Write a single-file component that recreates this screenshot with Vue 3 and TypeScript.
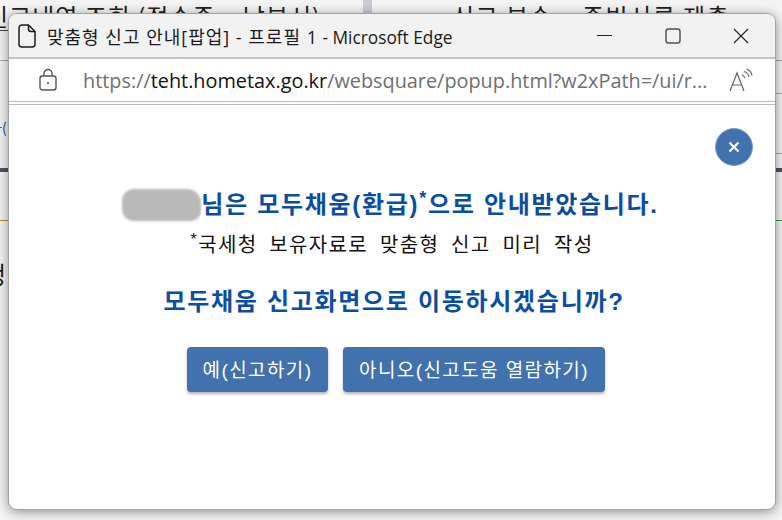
<script setup lang="ts">
const url = 'https://'
</script>

<template>
  <div class="desktop">
    <div class="behind">
      <div class="behind-title left">신고내역 조회 (접수증 · 납부서)</div>
      <div class="behind-title right">신고 부속 · 증빙서류 제출</div>
      <div class="rule dark"></div>
      <div class="rule orange"></div>
      <div class="rule-right green"></div>
      <div class="rule-right r1"></div>
      <div class="rule-right r2"></div>
      <div class="rule-right r3"></div>
      <div class="rule under"></div>
      <div class="rule gray-left"></div>
      <div class="glyph">정</div>
      <div class="glyph-blue">파(</div>
      <div class="divider"></div>
    </div>

    <section class="window">
      <header class="titlebar">
        <svg class="doc" width="18" height="24" viewBox="0 0 18 24" fill="none" stroke="#1c1c1c" stroke-width="1.5">
          <path d="M4 1h6.5L17 7.5V20a3 3 0 0 1-3 3H4a3 3 0 0 1-3-3V4a3 3 0 0 1 3-3z" />
          <path d="M10.500 1v4a2.500 2.500 0 0 0 2.500 2.500h4" />
        </svg>
        <span class="title"><span class="title-ko">맞춤형 신고 안내[팝업] - 프로필 1</span> - Microsoft Edge</span>
        <div class="controls">
          <svg width="16" height="16" viewBox="0 0 16 16"><path d="M0 7.500h15" stroke="#222" stroke-width="1" /></svg>
          <svg width="16" height="16" viewBox="0 0 16 16" fill="none"><rect x="1" y="1" width="14" height="14" rx="2.500" stroke="#555" stroke-width="1.500" /></svg>
          <svg width="16" height="16" viewBox="0 0 16 16"><path d="M1 1l14 14M15 1L1 15" stroke="#222" stroke-width="1.100" /></svg>
        </div>
      </header>
      <div class="addressbar">
        <svg class="lock" width="18" height="24" viewBox="0 0 18 24" fill="none" stroke="#555" stroke-width="1.400">
          <rect x="1" y="8" width="16" height="14" rx="2.500" />
          <path d="M5 8V5.500a4 4 0 0 1 8 0V8" />
          <circle cx="9" cy="15" r="1" fill="#555" stroke="none" />
        </svg>
        <div class="url"><span class="dim">{{ url }}</span><span class="host">teht.hometax.go.kr</span><span class="dim">/websquare/popup.html?w2xPath=/ui/r...</span></div>
        <svg class="read" width="24" height="24" viewBox="0 0 24 24" fill="none" stroke="#666" stroke-width="1.200">
          <path d="M1 23L8 5l7 18M3.500 17h9.500" />
          <path d="M13 7c1.500.5 2.500 1.700 2.800 3.200M15 3.500c2.800.8 4.500 3 5 5.500M17.500 1c3 1 5 3.500 5.500 6.500" />
        </svg>
      </div>
      <main class="content">
        <button class="close" type="button" aria-label="닫기">
          <svg width="12" height="12" viewBox="0 0 12 12"><path d="M1.500 1.500l9 9M10.500 1.500l-9 9" stroke="#fff" stroke-width="2.200" /></svg>
        </button>
        <div class="headline"><span class="blur"></span><span>님은 모두채움(환급)<sup>*</sup>으로 안내받았습니다.</span></div>
        <p class="note"><sup>*</sup>국세청 보유자료로 맞춤형 신고 미리 작성</p>
        <p class="question">모두채움 신고화면으로 이동하시겠습니까?</p>
        <div class="actions">
          <button class="btn yes" type="button">예(신고하기)</button>
          <button class="btn no" type="button">아니오(신고도움 열람하기)</button>
        </div>
      </main>
    </section>
  </div>
</template>

<style>
html, body { margin: 0; padding: 0; }
</style>

<style scoped>
.desktop {
  position: relative;
  width: 782px;
  height: 520px;
  overflow: hidden;
  background: #f4f4f4;
  font-family: "Noto Sans CJK KR", "Open Sans", sans-serif;
}
.behind { position: absolute; inset: 0; }
.behind-title {
  position: absolute;
  top: 0;
  font-size: 24px;
  line-height: 32px;
  letter-spacing: 1.500px;
  color: #222;
  white-space: nowrap;
}
.behind-title.left { left: -14px; letter-spacing: 1px; }
.behind-title.right { left: 452px; }
.rule { position: absolute; left: 0; right: 0; }
.rule.dark { top: 168px; height: 4px; background: #4d5468; }
.rule.orange { top: 220px; height: 1px; background: #c8891f; right: 400px; }
.rule.under { top: 30px; height: 1px; right: 700px; background: #444; }
.rule.gray-left { top: 60px; height: 1px; right: 700px; background: #aaa; }
.rule-right { position: absolute; left: 700px; right: 0; height: 1px; background: #aaa; }
.rule-right.green { top: 220px; background: #2f9e4f; }
.rule-right.r1 { top: 60px; }
.rule-right.r2 { top: 93px; }
.rule-right.r3 { top: 153px; }
.glyph { position: absolute; left: -16px; top: 258px; font-size: 24px; line-height: 32px; color: #222; }
.glyph-blue { position: absolute; left: -11px; top: 116px; font-size: 14px; line-height: 22px; color: #2a4f9a; white-space: nowrap; }
.divider { position: absolute; left: 363px; top: 0; width: 9px; height: 14px; background: #c8cdd6; }

.window {
  position: absolute;
  left: 8px;
  top: 13px;
  width: 768px;
  height: 497px;
  box-sizing: border-box;
  border-radius: 9px;
  overflow: hidden;
  background: #fff;
  border: 1px solid #a3a3a3;
  box-shadow: 0 2px 12px rgba(0, 0, 0, 0.42);
  display: flex;
  flex-direction: column;
}
.titlebar {
  height: 45px;
  flex: none;
  box-sizing: border-box;
  display: flex;
  align-items: center;
  padding: 0 0 0 9px;
  background: #f2f2f2;
  border-bottom: 2px solid #c4c4c4;
}
.doc { flex: none; margin-right: 11px; }
.title { font-size: 17.300px; color: #1b1b1b; white-space: nowrap; font-family: "Open Sans", "Noto Sans CJK KR", sans-serif; }
.title-ko { font-size: 18px; letter-spacing: 1px; }
.controls {
  margin-left: auto;
  display: flex;
  align-items: center;
  gap: 52px;
  padding-right: 26px;
}
.addressbar {
  height: 46px;
  flex: none;
  box-sizing: border-box;
  display: flex;
  align-items: center;
  padding: 0 14px 0 30px;
  background: #fff;
  border-bottom: 4px double #bbb;
}
.lock { flex: none; margin-right: 26px; }
.url { flex: 1; font-size: 19.850px; white-space: nowrap; overflow: hidden; font-family: "Open Sans", sans-serif; }
.dim { color: #6f6f6f; }
.host { color: #111; }
.read { flex: none; margin-right: 8px; }

.content {
  flex: 1;
  position: relative;
  display: flex;
  flex-direction: column;
  align-items: center;
  padding-top: 82px;
  font-family: "Liberation Sans", "Noto Sans CJK KR", sans-serif;
}
.close {
  position: absolute;
  top: 23px;
  right: 22px;
  width: 38px;
  height: 38px;
  padding: 0;
  border-radius: 50%;
  border: 1px solid #7f9fc6;
  background: #4272ae;
  display: flex;
  align-items: center;
  justify-content: center;
}
.headline {
  display: flex;
  align-items: center;
  font-size: 24px;
  font-weight: 700;
  line-height: 36px;
  letter-spacing: 1.700px;
  color: #0a4ea2;
  white-space: nowrap;
}
.headline sup { font-size: 18px; line-height: 0; vertical-align: 9px; }
.blur {
  width: 79px;
  height: 32px;
  margin-left: -3px;
  border-radius: 12px 14px 10px 12px;
  background: #b9b9b9;
  filter: blur(1px);
}
.note {
  margin: 9px 0 0;
  font-size: 20px;
  line-height: 26px;
  letter-spacing: 1.350px;
  word-spacing: 5px;
  color: #111;
  white-space: nowrap;
}
.note sup { font-size: 16px; line-height: 0; vertical-align: 7px; }
.question {
  margin: 28px 0 0;
  padding-left: 4px;
  font-size: 24px;
  line-height: 32px;
  font-weight: 700;
  letter-spacing: 1.700px;
  color: #0a4ea2;
  white-space: nowrap;
}
.actions { display: flex; gap: 15px; margin-top: 29px; padding-left: 8px; }
.btn {
  height: 45px;
  border: none;
  border-radius: 4px;
  background: #4272ae;
  color: #fff;
  font-family: inherit;
  font-size: 19px;
  letter-spacing: 1.400px;
  box-shadow: 0 2px 3px rgba(0, 0, 0, 0.3);
  white-space: nowrap;
  padding: 0 0 2px;
}
.yes { width: 141px; }
.no { width: 262px; }
</style>
